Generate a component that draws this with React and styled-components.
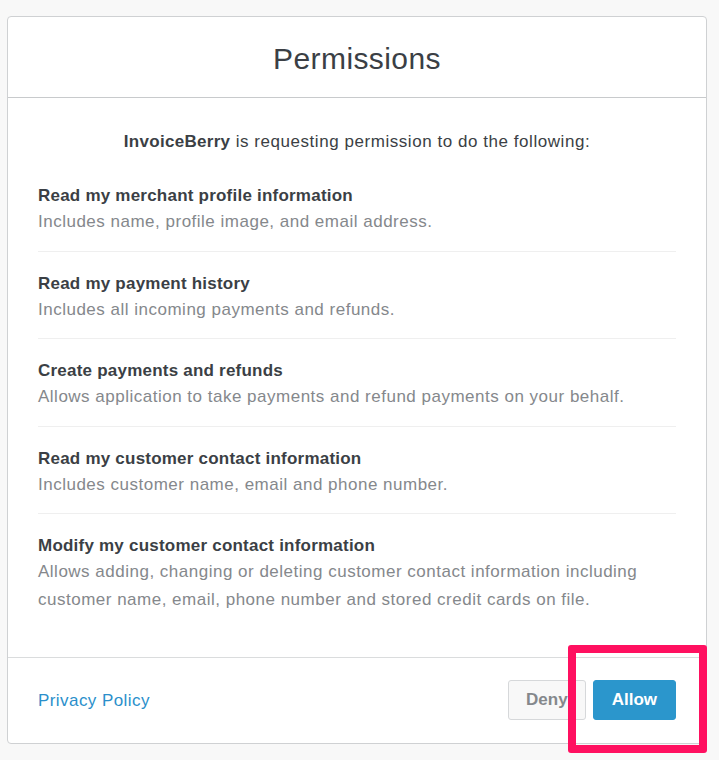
import React from 'react';
import styled, { createGlobalStyle } from 'styled-components';

const GlobalStyle = createGlobalStyle`
  html, body {
    margin: 0;
    padding: 0;
    background: #f8f8f8;
  }
  body {
    font-family: "Liberation Sans", Arial, sans-serif;
    -webkit-font-smoothing: antialiased;
  }
`;

const permissions = [
  {
    title: 'Read my merchant profile information',
    desc: 'Includes name, profile image, and email address.',
  },
  {
    title: 'Read my payment history',
    desc: 'Includes all incoming payments and refunds.',
  },
  {
    title: 'Create payments and refunds',
    desc: 'Allows application to take payments and refund payments on your behalf.',
  },
  {
    title: 'Read my customer contact information',
    desc: 'Includes customer name, email and phone number.',
  },
  {
    title: 'Modify my customer contact information',
    desc: 'Allows adding, changing or deleting customer contact information including customer name, email, phone number and stored credit cards on file.',
  },
];

const Page = styled.div`
  position: relative;
  width: 719px;
  height: 760px;
  padding: 16px 12px 0 7px;
  box-sizing: border-box;
`;

const Card = styled.div`
  width: 700px;
  background: #fff;
  border: 1px solid #cfd1d3;
  border-radius: 4px;
  box-sizing: border-box;
  display: flex;
  flex-direction: column;
`;

const Header = styled.div`
  height: 81px;
  border-bottom: 1px solid #c8cacc;
  display: flex;
  align-items: center;
  justify-content: center;
  padding-top: 3px;
  box-sizing: border-box;

  h1 {
    margin: 0;
    font-size: 30px;
    font-weight: 400;
    letter-spacing: 0.4px;
    color: #3b3f45;
  }
`;

const Body = styled.div`
  padding: 32px 30px 28px;
`;

const Intro = styled.p`
  margin: 0 0 30px;
  text-align: center;
  font-size: 17px;
  line-height: 24px;
  letter-spacing: 0.55px;
  color: #3b3f45;

  strong {
    font-weight: 700;
    letter-spacing: 0.3px;
  }
`;

const Item = styled.div`
  padding: 20px 0 14.5px;
  border-top: 1px solid #efefef;

  &:first-of-type {
    border-top: none;
    padding-top: 0;
  }
`;

const ItemTitle = styled.div`
  font-size: 17px;
  line-height: 24px;
  font-weight: 700;
  letter-spacing: 0.22px;
  color: #3b3f45;
`;

const ItemDesc = styled.div`
  font-size: 17px;
  line-height: 28px;
  letter-spacing: 0.5px;
  color: #85888c;
`;

const Footer = styled.div`
  border-top: 1px solid #dadcdd;
  height: 86px;
  padding: 0 30px;
  box-sizing: border-box;
  display: flex;
  align-items: center;
  justify-content: space-between;
`;

const Link = styled.a`
  font-size: 17px;
  letter-spacing: 0.43px;
  color: #2b8fcb;
  text-decoration: none;
  margin-top: 2px;
`;

const Actions = styled.div`
  display: flex;
  gap: 7px;
`;

const Button = styled.button`
  height: 40px;
  padding: 0 ${(p) => (p.$primary ? '18px' : '17px')};
  border-radius: 3px;
  font-family: inherit;
  font-size: 17px;
  font-weight: 700;
  cursor: pointer;
  border: 1px solid ${(p) => (p.$primary ? '#2b96cc' : '#d6d8da')};
  background: ${(p) => (p.$primary ? '#2b96cc' : '#f8f8f8')};
  color: ${(p) => (p.$primary ? '#fff' : '#85888c')};
`;

const Highlight = styled.div`
  position: absolute;
  left: 568px;
  top: 645px;
  width: 139px;
  height: 108px;
  border: 8px solid #ff1060;
  border-radius: 3px;
  box-sizing: border-box;
  pointer-events: none;
`;

export default function App() {
  return (
    <>
      <GlobalStyle />
      <Page>
        <Card>
          <Header>
            <h1>Permissions</h1>
          </Header>
          <Body>
            <Intro>
              <strong>InvoiceBerry</strong> is requesting permission to do the following:
            </Intro>
            {permissions.map((p) => (
              <Item key={p.title}>
                <ItemTitle>{p.title}</ItemTitle>
                <ItemDesc>{p.desc}</ItemDesc>
              </Item>
            ))}
          </Body>
          <Footer>
            <Link href="#">Privacy Policy</Link>
            <Actions>
              <Button>Deny</Button>
              <Button $primary>Allow</Button>
            </Actions>
          </Footer>
        </Card>
        <Highlight />
      </Page>
    </>
  );
}
